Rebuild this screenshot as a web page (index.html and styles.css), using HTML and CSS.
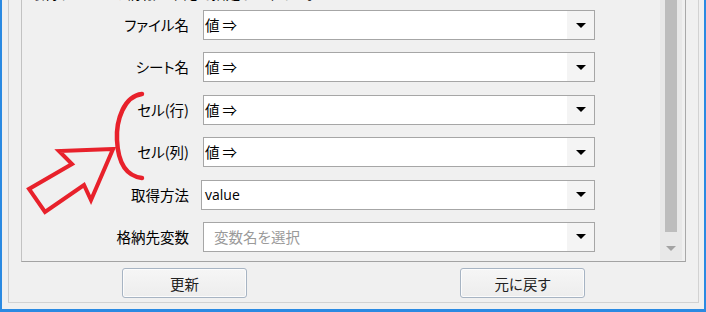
FILE: index.html
```html
<!DOCTYPE html>
<html lang="ja">
<head>
<meta charset="utf-8">
<title>セル値取得</title>
<link rel="stylesheet" href="styles.css">
</head>
<body>
<div class="window">
  <div class="outer">
    <div class="inner">
      <div class="form">
        <div class="desc">取得するセルの情報を下記で指定して下さい。</div>
        <div class="grid">
          <div class="label">ファイル名</div>
          <div class="combo"><span class="val">値<span class="sym">⇒</span></span><span class="btn"><i class="arrow"></i></span></div>
          <div class="label">シート名</div>
          <div class="combo"><span class="val">値<span class="sym">⇒</span></span><span class="btn"><i class="arrow"></i></span></div>
          <div class="label">セル(行)</div>
          <div class="combo"><span class="val">値<span class="sym">⇒</span></span><span class="btn"><i class="arrow"></i></span></div>
          <div class="label">セル(列)</div>
          <div class="combo"><span class="val">値<span class="sym">⇒</span></span><span class="btn"><i class="arrow"></i></span></div>
          <div class="label">取得方法</div>
          <div class="combo combo-wide"><span class="val val-latin">value</span><span class="btn"><i class="arrow"></i></span></div>
          <div class="label">格納先変数</div>
          <div class="combo"><span class="val placeholder">変数名を選択</span><span class="btn"><i class="arrow"></i></span></div>
        </div>
      </div>
      <div class="scroll">
        <div class="thumb"></div>
        <div class="sbtn"><i class="sarrow"></i></div>
      </div>
    </div>
    <div class="actions">
      <button class="button">更新</button>
      <button class="button">元に戻す</button>
    </div>
  </div>
</div>
<svg class="annot" width="706" height="312" viewBox="0 0 706 312" xmlns="http://www.w3.org/2000/svg">
  <path d="M142,94 C124,96 116,120 117,140 C118,162 126,176 142,178" fill="none" stroke="#e8212b" stroke-width="4.5" stroke-linecap="round"/>
  <polygon points="113,149 59,151 72,164 29,189 45,212 84,185 91,200" fill="none" stroke="#e8212b" stroke-width="4" stroke-linejoin="miter"/>
</svg>
</body>
</html>
```
FILE: styles.css
```css
html, body {
  margin: 0;
  padding: 0;
}
body {
  width: 706px;
  height: 312px;
  overflow: hidden;
  background: #f0f0f0;
  font-family: "Noto Sans CJK JP", "Noto Sans", sans-serif;
  font-size: 14.5px;
  font-feature-settings: "palt";
  color: #000;
  position: relative;
}
.window {
  box-sizing: border-box;
  width: 706px;
  height: 312px;
  border-left: 2px solid #2b8ae2;
  border-right: 2px solid #2b8ae2;
  border-bottom: 3px solid #2b8ae2;
  padding: 0 5px 6px 6px;
}
.outer {
  box-sizing: border-box;
  height: 303px;
  border-left: 1px solid #cbcbcb;
  border-right: 1px solid #d2d2d2;
  border-bottom: 1px solid #d2d2d2;
  display: flex;
  flex-direction: column;
}
.inner {
  box-sizing: border-box;
  height: 262px;
  margin: 0 12px 0 12px;
  border-left: 1px solid #c2c2c2;
  border-right: 1px solid #a9a9a9;
  border-bottom: 1px solid #a3a3a3;
  display: flex;
  overflow: hidden;
}
.form {
  flex: 1;
}
.desc {
  height: 20px;
  line-height: 20px;
  margin: -17px 0 7px 8px;
  white-space: nowrap;
}
.grid {
  display: grid;
  grid-template-columns: 167px 392px;
  column-gap: 14px;
  row-gap: 12.4px;
  grid-auto-rows: 30px;
}
.label {
  text-align: right;
  line-height: 30px;
  white-space: nowrap;
}
.combo {
  box-sizing: border-box;
  height: 30px;
  border: 1px solid #a6a6a6;
  background: #fff;
  display: flex;
  align-items: center;
}
.combo-wide {
  margin-left: -2px;
}
.val {
  flex: 1;
  padding-left: 1px;
  line-height: 28px;
  white-space: nowrap;
}
.sym {
  margin-left: 3px;
}
.val-latin {
  padding-left: 3px;
  font-family: "Open Sans", "Noto Sans", sans-serif;
  font-size: 14px;
}
.placeholder {
  padding-left: 10px;
  color: #9a9a9a;
}
.btn {
  width: 27px;
  height: 28px;
  background: #f4f4f4;
  display: flex;
  align-items: center;
  justify-content: center;
}
.arrow {
  width: 0;
  height: 0;
  border-left: 5px solid transparent;
  border-right: 5px solid transparent;
  border-top: 5px solid #000;
}
.scroll {
  width: 22px;
  height: 260px;
  margin-right: 3px;
  background: #e8e8e8;
  display: flex;
  flex-direction: column;
}
.thumb {
  flex: 1;
  margin: 0 5px 6px 5px;
  background: #bdbdbd;
}
.sbtn {
  height: 22px;
  display: flex;
  align-items: center;
  justify-content: center;
}
.sarrow {
  width: 0;
  height: 0;
  border-left: 5px solid transparent;
  border-right: 5px solid transparent;
  border-top: 5px solid #a3a3a3;
  margin-top: -2px;
}
.actions {
  display: flex;
  gap: 213px;
  padding: 6px 0 0 113px;
}
.button {
  box-sizing: border-box;
  width: 125px;
  height: 30px;
  border: 1px solid #a7b4c3;
  border-radius: 3px;
  background: linear-gradient(#f6f6f6, #ededed);
  box-shadow: inset 0 0 0 1px #fcfcfc;
  font-family: "Noto Sans CJK JP", "Noto Sans", sans-serif;
  font-feature-settings: "palt";
  font-size: 14.5px;
  color: #222;
  padding: 0;
}
.annot {
  position: absolute;
  left: 0;
  top: 0;
  pointer-events: none;
}
```
